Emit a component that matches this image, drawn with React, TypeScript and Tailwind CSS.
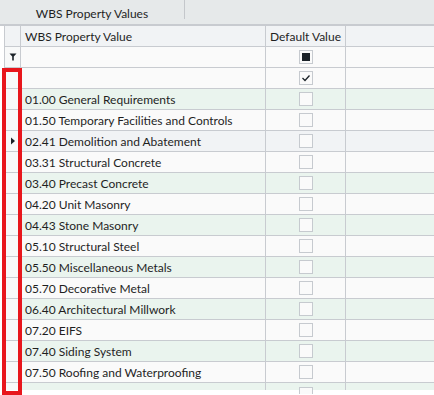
import React from 'react'

const rows = [
    "01.00 General Requirements",
    "01.50 Temporary Facilities and Controls",
    "02.41 Demolition and Abatement",
    "03.31 Structural Concrete",
    "03.40 Precast Concrete",
    "04.20 Unit Masonry",
    "04.43 Stone Masonry",
    "05.10 Structural Steel",
    "05.50 Miscellaneous Metals",
    "05.70 Decorative Metal",
    "06.40 Architectural Millwork",
    "07.20 EIFS",
    "07.40 Siding System",
    "07.50 Roofing and Waterproofing",
];

const CURRENT = 2;

function CheckBox({ mode }: { mode?: "fill" | "check" }) {
    return (
        <div className="w-[14px] h-[14px] border border-[#c6cacf] bg-[#fafafa] flex items-center justify-center">
            {mode === "fill" && <div className="w-[8px] h-[8px] bg-[#1b2228]" />}
            {mode === "check" && (
                <svg width="10" height="10" viewBox="0 0 10 10">
                    <path d="M1.5 5 L4 7.5 L8.5 2.5" fill="none" stroke="#1b2228" strokeWidth="1.3" />
                </svg>
            )}
        </div>
    )
}

function Row({ bg, indicator, text, box, h = "h-[21px]", noBorder }: { bg: string, indicator?: React.ReactNode, text?: string, box?: React.ReactNode, h?: string, noBorder?: boolean }) {
    return (
        <div className={`flex ${h} ${noBorder ? "" : "border-b"} border-[#c8cbd0] ${bg}`}>
            <div className="w-[16px] border-r border-[#c8cbd0] bg-[#f8f9f9] flex items-center justify-center">{indicator}</div>
            <div className="w-[245px] border-r border-[#c8cbd0] pl-[4px] pt-[2px] flex items-center text-[12px] text-[#1f1f1f] whitespace-nowrap overflow-hidden">{text}</div>
            <div className="w-[80px] border-r border-[#c8cbd0] flex items-center justify-center">{box}</div>
            <div className="flex-1" />
        </div>
    )
}

export default function App() {
    return (
        <div className="relative w-[434px] h-[395px] bg-white overflow-hidden" style={{ fontFamily: 'Lato, "Noto Sans", sans-serif' }}>
            {/* tab strip */}
            <div className="flex h-[26px] bg-[#e6e9ea] border-b-2 border-[#c8cbd0]">
                <div className="w-[185px] h-[19px] border-r border-[#c4c7cb] flex items-center justify-center pt-[9px] text-[12px] text-[#1f1f1f]">
                    WBS Property Values
                </div>
            </div>

            {/* grid */}
            <div className="ml-[4px] border-l border-[#c8cbd0]">
                <div className="flex h-[21px] border-b border-[#c8cbd0] bg-[#f1f3f5]">
                    <div className="w-[16px] border-r border-[#c8cbd0]" />
                    <div className="w-[245px] border-r border-[#c8cbd0] pl-[4px] pt-[1px] flex items-center text-[12px] text-[#1f1f1f]">WBS Property Value</div>
                    <div className="w-[80px] border-r border-[#c8cbd0] pt-[1px] flex items-center justify-center text-[12px] text-[#1f1f1f]">Default Value</div>
                    <div className="flex-1" />
                </div>
                <Row
                    bg="bg-[#fafafa]"
                    indicator={
                        <svg width="8" height="8" viewBox="0 0 8 8">
                            <path d="M0.5 0.5 H7.5 L4.8 3.5 V7.5 H3.2 V3.5 Z" fill="#1b2228" />
                        </svg>
                    }
                    box={<CheckBox mode="fill" />}
                />
                <Row bg="bg-[#fafafa]" box={<CheckBox mode="check" />} />
                {rows.map((r, i) => (
                    <Row
                        key={r}
                        bg={i === CURRENT ? "bg-[#f1f3f5]" : i % 2 === 0 ? "bg-[#eaf4ee]" : "bg-[#fafafa]"}
                        indicator={i === CURRENT ? (
                            <svg width="6" height="8" viewBox="0 0 6 8">
                                <path d="M1 0.5 L5 4 L1 7.5 Z" fill="#1b2228" />
                            </svg>
                        ) : undefined}
                        text={r}
                        box={<CheckBox />}
                    />
                ))}
                <Row bg="bg-[#eaf4ee]" h="h-[7px]" noBorder box={<div className="w-[14px] h-[7px] mt-[7px] border border-b-0 border-[#c6cacf] bg-[#fafafa]" />} />
            </div>

            {/* highlight */}
            <div className="absolute left-[2px] top-[68px] w-[20px] h-[327px] border-4 border-[#e8161c]" />
        </div>
    )
}
